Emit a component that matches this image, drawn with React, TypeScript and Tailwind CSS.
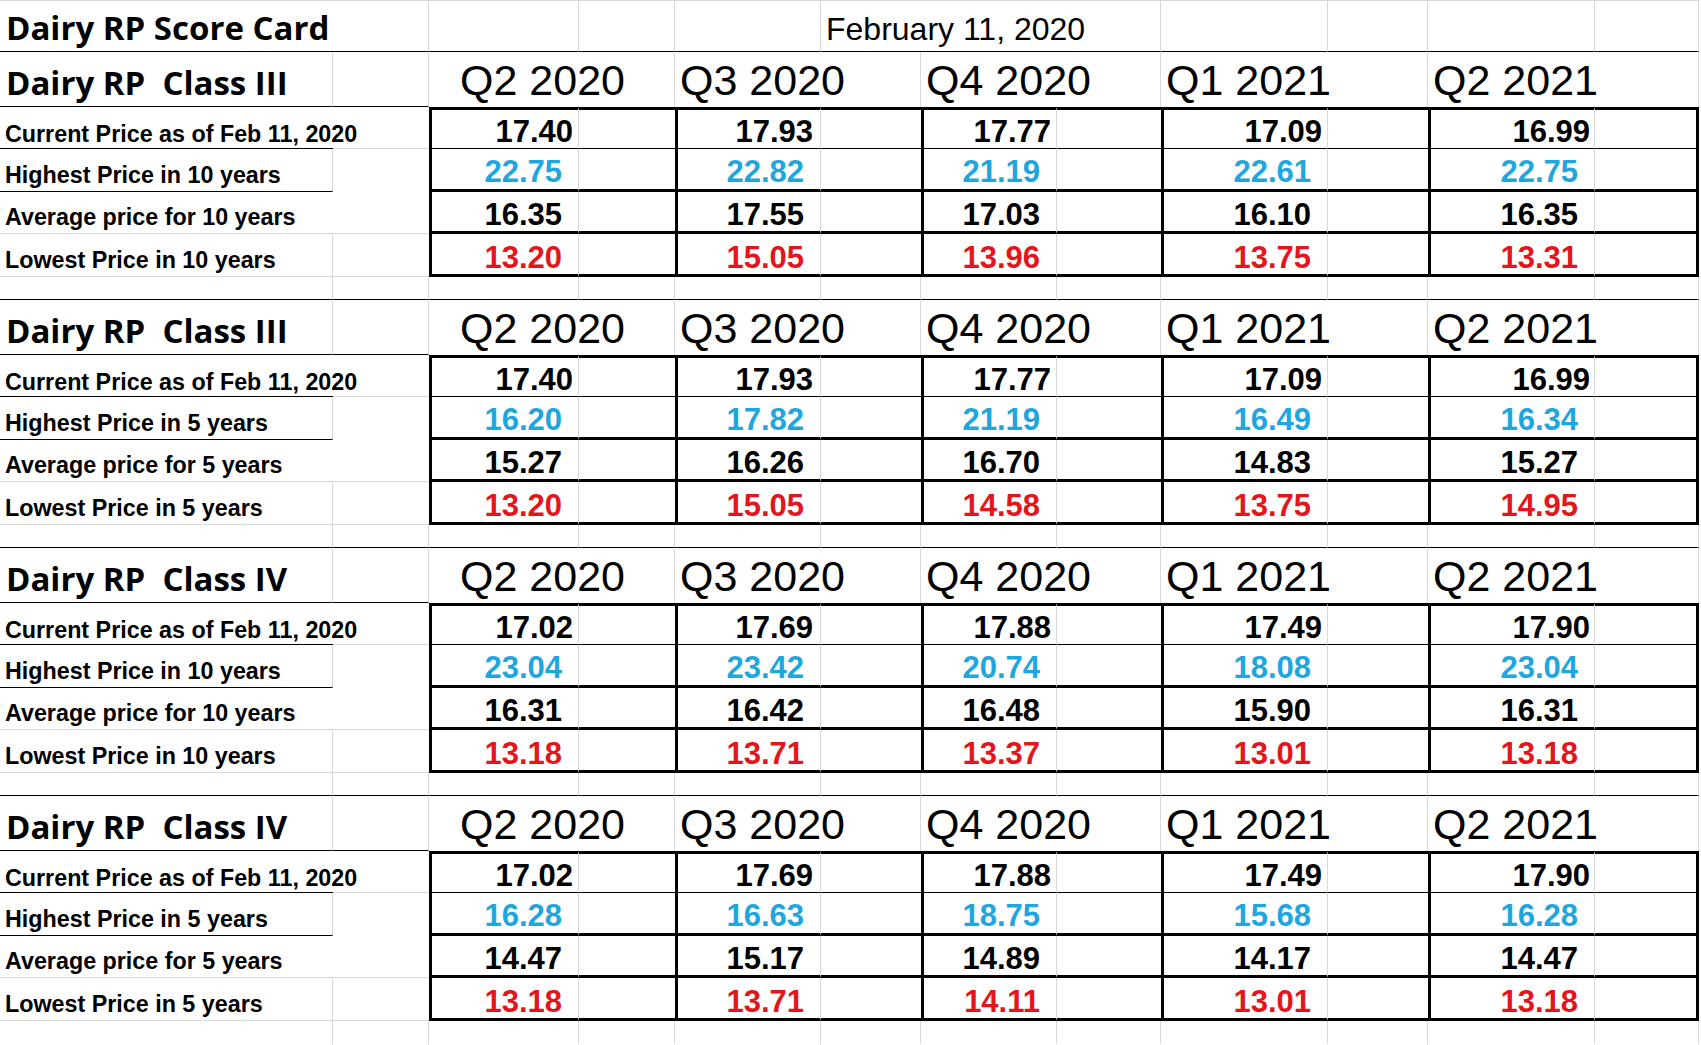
import clsx from 'clsx';

type SectionData = {
  title: string;
  years: string;
  cur: string[];
  hi: string[];
  avg: string[];
  lo: string[];
};

const quarters = ['Q2 2020', 'Q3 2020', 'Q4 2020', 'Q1 2021', 'Q2 2021'];

const sections: SectionData[] = [
  {
    title: 'Dairy RP  Class III',
    years: '10',
    cur: ['17.40', '17.93', '17.77', '17.09', '16.99'],
    hi: ['22.75', '22.82', '21.19', '22.61', '22.75'],
    avg: ['16.35', '17.55', '17.03', '16.10', '16.35'],
    lo: ['13.20', '15.05', '13.96', '13.75', '13.31'],
  },
  {
    title: 'Dairy RP  Class III',
    years: '5',
    cur: ['17.40', '17.93', '17.77', '17.09', '16.99'],
    hi: ['16.20', '17.82', '21.19', '16.49', '16.34'],
    avg: ['15.27', '16.26', '16.70', '14.83', '15.27'],
    lo: ['13.20', '15.05', '14.58', '13.75', '14.95'],
  },
  {
    title: 'Dairy RP  Class IV',
    years: '10',
    cur: ['17.02', '17.69', '17.88', '17.49', '17.90'],
    hi: ['23.04', '23.42', '20.74', '18.08', '23.04'],
    avg: ['16.31', '16.42', '16.48', '15.90', '16.31'],
    lo: ['13.18', '13.71', '13.37', '13.01', '13.18'],
  },
  {
    title: 'Dairy RP  Class IV',
    years: '5',
    cur: ['17.02', '17.69', '17.88', '17.49', '17.90'],
    hi: ['16.28', '16.63', '18.75', '15.68', '16.28'],
    avg: ['14.47', '15.17', '14.89', '14.17', '14.47'],
    lo: ['13.18', '13.71', '14.11', '13.01', '13.18'],
  },
];

// spreadsheet column widths, A..L
const sheetGrid =
  'grid grid-cols-[333px_96px_150px_96px_146px_100px_136px_104px_167px_100px_167px_104px]';

const curPad = ['pr-[5px]', 'pr-[7px]', 'pr-[5px]', 'pr-[5px]', 'pr-[4px]'];

type RowKey = 'cur' | 'hi' | 'avg' | 'lo';

const rowDefs: {
  key: RowKey;
  label: (y: string) => string;
  color: string;
  labelCell: string;
  spacer: string;
  box: string;
  numPad: string;
}[] = [
  {
    key: 'cur',
    label: () => 'Current Price as of Feb 11, 2020',
    color: 'text-black',
    labelCell: 'border-b border-b-black pb-[2px]',
    spacer: 'border-b border-b-[#d9d9d9]',
    box: 'border-t-[3px] border-t-black border-b border-b-black',
    numPad: 'pb-[1px]',
  },
  {
    key: 'hi',
    label: (y) => `Highest Price in ${y} years`,
    color: 'text-[#1ea6df]',
    labelCell: 'border-b border-r border-b-black border-r-[#d9d9d9] pb-[4px]',
    spacer: '',
    box: 'border-b-[3px] border-b-black',
    numPad: 'pb-[2px]',
  },
  {
    key: 'avg',
    label: (y) => `Average price for ${y} years`,
    color: 'text-black',
    labelCell: 'border-b border-b-[#d9d9d9] pb-[4px]',
    spacer: 'border-b border-b-[#d9d9d9]',
    box: 'border-b-[3px] border-b-black',
    numPad: 'pb-[1px]',
  },
  {
    key: 'lo',
    label: (y) => `Lowest Price in ${y} years`,
    color: 'text-[#e2161c]',
    labelCell: 'border-b border-r border-[#d9d9d9] pb-[4px]',
    spacer: 'border-b border-b-[#d9d9d9]',
    box: 'border-b-[3px] border-b-black',
    numPad: 'pb-[1px]',
  },
];

function TitleRow() {
  return (
    <div className={clsx(sheetGrid, 'h-[52px]')}>
      <div className="flex items-end whitespace-nowrap border-y border-t-[#d9d9d9] border-b-black pb-[7px] pl-[6px] font-['Open_Sans',sans-serif] text-[33px] font-bold leading-none">
        Dairy RP Score Card
      </div>
      <div className="border-y border-r border-t-[#d9d9d9] border-r-[#d9d9d9] border-b-black" />
      <div className="border-y border-r border-t-[#d9d9d9] border-r-[#d9d9d9] border-b-black" />
      <div className="border-y border-r border-t-[#d9d9d9] border-r-[#d9d9d9] border-b-black" />
      <div className="border-y border-r border-t-[#d9d9d9] border-r-[#d9d9d9] border-b-black" />
      <div className="col-span-3 flex items-end whitespace-nowrap border-y border-r border-t-[#d9d9d9] border-r-[#d9d9d9] border-b-black pb-[6px] pl-[5px] text-[32px] leading-none">
        February 11, 2020
      </div>
      <div className="border-y border-r border-t-[#d9d9d9] border-r-[#d9d9d9] border-b-black" />
      <div className="border-y border-r border-t-[#d9d9d9] border-r-[#d9d9d9] border-b-black" />
      <div className="border-y border-r border-t-[#d9d9d9] border-r-[#d9d9d9] border-b-black" />
      <div className="border-y border-r border-t-[#d9d9d9] border-r-[#d9d9d9] border-b-black" />
    </div>
  );
}

function Section({ data, last }: { data: SectionData; last: boolean }) {
  return (
    <div className={clsx(sheetGrid, 'grid-rows-[55px_42px_43px_42px_43px_23px]')}>
      {/* header row */}
      <div className="flex items-end whitespace-pre border-b border-r border-b-black border-r-[#d9d9d9] pb-[7px] pl-[6px] font-['Open_Sans',sans-serif] text-[33px] font-bold leading-none">
        {data.title}
      </div>
      <div className="border-b border-r border-b-black border-r-[#d9d9d9]" />
      {quarters.map((q, i) => (
        <div
          key={q}
          className={clsx(
            'col-span-2 flex items-end whitespace-nowrap border-r border-r-[#d9d9d9] pb-[5px] text-[43px] leading-none',
            i === 0 ? 'pl-[31px]' : 'pl-[5px]',
          )}
        >
          {q}
        </div>
      ))}

      {/* data rows */}
      {rowDefs.map((row) => (
        <div key={row.key} className="contents">
          <div
            className={clsx(
              'flex items-end whitespace-nowrap pl-[5px] text-[23.3px] font-bold leading-none',
              row.labelCell,
            )}
          >
            {row.label(data.years)}
          </div>
          <div className={row.spacer} />
          {data[row.key].map((v, i) => (
            <div key={i} className="contents">
              <div
                className={clsx(
                  'flex items-end justify-end border-l-[3px] border-r border-l-black border-r-[#d9d9d9] text-[31px] font-bold leading-none',
                  row.box,
                  row.numPad,
                  row.color,
                  row.key === 'cur' ? curPad[i] : 'pr-[16px]',
                )}
              >
                {v}
              </div>
              <div className={clsx(row.box, i === 4 && 'border-r-[3px] border-r-black')} />
            </div>
          ))}
        </div>
      ))}

      {/* spacer row */}
      {Array.from({ length: 12 }).map((_, i) => (
        <div
          key={i}
          className={clsx(
            'border-r border-r-[#d9d9d9]',
            !last && 'border-b border-b-black',
          )}
        />
      ))}
    </div>
  );
}

export default function App() {
  return (
    <div className="min-h-screen w-[1701px] bg-white font-['Liberation_Sans',Arial,sans-serif] text-black">
      <TitleRow />
      {sections.map((s, i) => (
        <Section key={i} data={s} last={i === sections.length - 1} />
      ))}
    </div>
  );
}
